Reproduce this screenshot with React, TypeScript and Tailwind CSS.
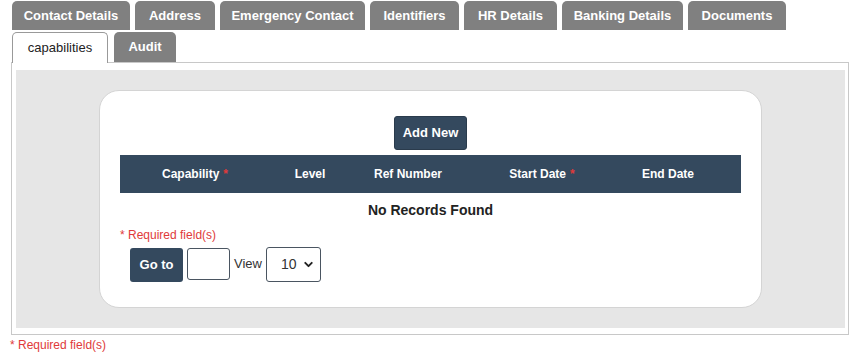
import { ChevronDown } from "lucide-react";

const topTabs = [
  { label: "Contact Details", w: "w-[118px]" },
  { label: "Address", w: "w-[80px]" },
  { label: "Emergency Contact", w: "w-[145px]" },
  { label: "Identifiers", w: "w-[89px]" },
  { label: "HR Details", w: "w-[93px]" },
  { label: "Banking Details", w: "w-[121px]" },
  { label: "Documents", w: "w-[98px]" },
];

function Req() {
  return <span className="text-[#e03a3a] ml-1">*</span>;
}

export default function App() {
  return (
    <div className="w-[860px] h-[357px] bg-white font-['Liberation_Sans',Arial,sans-serif] text-[#222]">
      {/* tab rows */}
      <div className="pt-px pl-[12px] flex gap-[5px]">
        {topTabs.map((t) => (
          <div
            key={t.label}
            className={`${t.w} h-[29px] rounded-t-[5px] bg-[#808080] text-white text-[13px] font-bold flex items-center justify-center`}
          >
            {t.label}
          </div>
        ))}
      </div>
      <div className="pt-[2px] pl-[12px] flex gap-[6px] relative z-10">
        <div className="w-[96px] h-[31px] -mb-px rounded-t-[5px] border border-b-0 border-[#999] bg-white text-[13px] text-[#222] flex items-center justify-center">
          capabilities
        </div>
        <div className="w-[62px] h-[30px] rounded-t-[5px] bg-[#808080] text-white text-[13px] font-bold flex items-center justify-center">
          Audit
        </div>
      </div>

      {/* panel */}
      <div className="ml-[11px] w-[838px] border border-[#c8c8c8] pt-[7px] pl-[4px] pr-[3px] pb-[6px]">
        <div className="bg-[#e6e6e6] py-[20px]">
          <div className="mx-auto w-[663px] h-[218px] bg-white border border-[#d4d4d4] rounded-[20px] px-[20px] pt-[25px]">
            <div className="flex justify-center">
              <button className="w-[73px] h-[34px] rounded-[3px] bg-[#34495e] border border-[#2a3b4c] text-white text-[13px] font-bold">
                Add New
              </button>
            </div>
            <div className="mt-[5px] h-[38px] bg-[#34495e] text-white text-[12px] font-bold grid grid-cols-[150px_80px_116px_152px_100px_1fr] items-center text-center">
              <div>
                Capability
                <Req />
              </div>
              <div>Level</div>
              <div>Ref Number</div>
              <div>
                Start Date
                <Req />
              </div>
              <div>End Date</div>
              <div />
            </div>
            <div className="h-[35px] flex items-center justify-center text-[14px] font-bold text-[#222]">
              No Records Found
            </div>
            <div className="text-[12px] text-[#e03a3a] leading-[14px]">* Required field(s)</div>
            <div className="mt-[4px] ml-[10px] flex items-center gap-[4px]">
              <button className="w-[53px] h-[34px] mt-[2px] rounded-[3px] bg-[#34495e] text-white text-[13px] font-bold">
                Go to
              </button>
              <input className="w-[43px] h-[32px] rounded-[3px] border border-[#4a5561] bg-white" />
              <span className="text-[13px] text-[#333]">View</span>
              <div className="w-[55px] h-[35px] rounded-[3px] border border-[#4a5561] bg-white flex items-center pl-[14px] pr-[5px] justify-between text-[14px] text-[#333]">
                10
                <ChevronDown size={13} strokeWidth={3.5} className="text-[#222]" />
              </div>
            </div>
          </div>
        </div>
      </div>
      <div className="pl-[10px] pt-px text-[12px] text-[#e03a3a]">* Required field(s)</div>
    </div>
  );
}
